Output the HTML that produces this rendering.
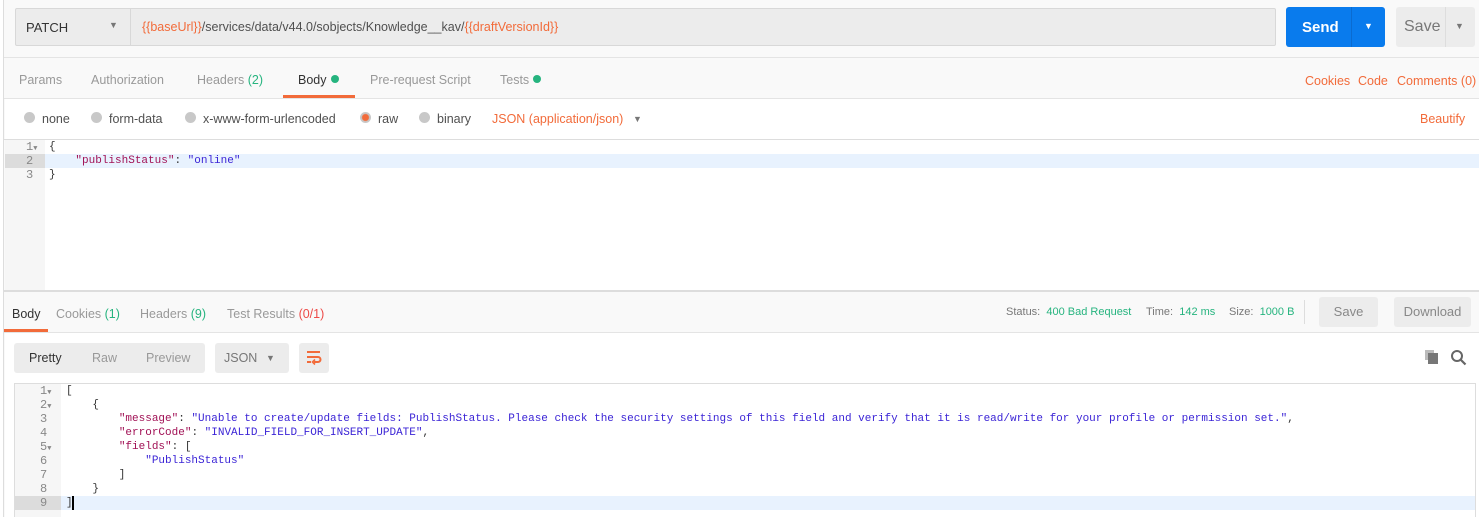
<!DOCTYPE html>
<html><head><meta charset="utf-8"><style>
*{margin:0;padding:0;box-sizing:border-box}
body{width:1479px;height:517px;overflow:hidden;background:#f9f9f9;font-family:"Liberation Sans",sans-serif;font-size:13px;color:#505050;position:relative}
.a{position:absolute;white-space:nowrap}
.o{color:#f26b3a}.g{color:#26b47f}.r{color:#ed4b48}
.mono{font-family:"Liberation Mono",monospace;font-size:11px;white-space:pre}
.k{color:#a11155}.s{color:#3b24d6}
.dot{display:inline-block;width:8px;height:8px;border-radius:50%;background:#26b47f;margin-left:4px;vertical-align:1px}
.rad{display:inline-block;width:11px;height:11px;border-radius:50%;background:#c8c8c8;margin-right:7px;vertical-align:0}
.ln{position:absolute;font-family:"Liberation Mono",monospace;font-size:12px;color:#888;line-height:14px;height:14px}
</style></head><body>
<div class="a" style="left:0;top:0;width:4px;height:517px;background:#fff;border-right:1px solid #ddd"></div>
<div class="a" style="left:15px;top:8px;width:1261px;height:38px;background:#ececec;border:1px solid #d8d8d8;border-radius:2px"></div>
<div class="a" style="left:130px;top:9px;width:1px;height:36px;background:#d8d8d8"></div>
<div class="a" style="left:26px;top:20px;color:#333">PATCH</div>
<div class="a" style="left:109px;top:20px;font-size:9px;color:#777">▼</div>
<div class="a" style="left:142px;top:20px;color:#505050;font-size:12.5px"><span class="o">{{baseUrl}}</span>/services/data/v44.0/sobjects/Knowledge__kav/<span class="o">{{draftVersionId}}</span></div>
<div class="a" style="left:1286px;top:7px;width:99px;height:40px;background:#097bed;border-radius:3px"></div>
<div class="a" style="left:1351px;top:7px;width:1px;height:40px;background:#0a6bd0"></div>
<div class="a" style="left:1302px;top:19px;color:#fff;font-weight:bold;font-size:15px">Send</div>
<div class="a" style="left:1364px;top:21px;color:#fff;font-size:9px">▼</div>
<div class="a" style="left:1396px;top:7px;width:79px;height:40px;background:#ececec;border-radius:3px"></div>
<div class="a" style="left:1445px;top:7px;width:1px;height:40px;background:#ddd"></div>
<div class="a" style="left:1404px;top:18px;color:#777;font-size:16px">Save</div>
<div class="a" style="left:1455px;top:21px;color:#777;font-size:9px">▼</div>
<div class="a" style="left:4px;top:57px;width:1475px;height:1px;background:#e4e4e4"></div>
<div class="a" style="left:19px;top:73px;color:#999;font-size:12.5px">Params</div>
<div class="a" style="left:91px;top:73px;color:#999;font-size:12.5px">Authorization</div>
<div class="a" style="left:197px;top:73px;color:#999;font-size:12.5px">Headers <span class="g">(2)</span></div>
<div class="a" style="left:298px;top:73px;color:#333;font-size:12.5px">Body<span class="dot"></span></div>
<div class="a" style="left:370px;top:73px;color:#999;font-size:12.5px">Pre-request Script</div>
<div class="a" style="left:500px;top:73px;color:#999;font-size:12.5px">Tests<span class="dot"></span></div>
<div class="a" style="left:283px;top:95px;width:72px;height:3px;background:#f26b3a"></div>
<div class="a o" style="left:1305px;top:74px;font-size:12.5px">Cookies</div>
<div class="a o" style="left:1358px;top:74px;font-size:12.5px">Code</div>
<div class="a o" style="left:1397px;top:74px;font-size:12.5px">Comments (0)</div>
<div class="a" style="left:4px;top:98px;width:1475px;height:1px;background:#e4e4e4"></div>
<div class="a" style="left:5px;top:99px;width:1474px;height:40px;background:#fff"></div>
<div class="a" style="left:24px;top:112px;font-size:12.5px"><span class="rad"></span>none</div>
<div class="a" style="left:91px;top:112px;font-size:12.5px"><span class="rad"></span>form-data</div>
<div class="a" style="left:185px;top:112px;font-size:12.5px"><span class="rad"></span>x-www-form-urlencoded</div>
<div class="a" style="left:360px;top:112px;font-size:12.5px"><span class="rad" style="background:radial-gradient(circle,#f26b3a 0 3px,#c8c8c8 4px)"></span>raw</div>
<div class="a" style="left:419px;top:112px;font-size:12.5px"><span class="rad"></span>binary</div>
<div class="a o" style="left:492px;top:112px;font-size:12.5px">JSON (application/json)</div>
<div class="a" style="left:633px;top:114px;font-size:9px;color:#777">▼</div>
<div class="a o" style="left:1420px;top:112px;font-size:12.5px">Beautify</div>
<div class="a" style="left:4px;top:139px;width:1475px;height:1px;background:#ddd"></div>
<div class="a" style="left:5px;top:140px;width:1474px;height:150px;background:#fff"></div>
<div class="a" style="left:5px;top:140px;width:40px;height:150px;background:#f6f6f6"></div>
<div class="a" style="left:5px;top:154px;width:40px;height:14px;background:#dcdcdc"></div>
<div class="a" style="left:45px;top:154px;width:1434px;height:14px;background:#e8f2fe"></div>
<div class="ln" style="left:26px;top:140px">1<span style="font-size:7px">▼</span></div>
<div class="ln" style="left:26px;top:154px">2</div>
<div class="ln" style="left:26px;top:168px">3</div>
<div class="a mono" style="left:49px;top:140px;line-height:14px;color:#333">{
    <span class="k">"publishStatus"</span>: <span class="s">"online"</span>
}</div>
<div class="a" style="left:4px;top:290px;width:1475px;height:2px;background:#ddd"></div>
<div class="a" style="left:12px;top:307px;color:#333;font-size:12.5px">Body</div>
<div class="a" style="left:56px;top:307px;color:#999;font-size:12.5px">Cookies <span class="g">(1)</span></div>
<div class="a" style="left:140px;top:307px;color:#999;font-size:12.5px">Headers <span class="g">(9)</span></div>
<div class="a" style="left:227px;top:307px;color:#999;font-size:12.5px">Test Results <span class="r">(0/1)</span></div>
<div class="a" style="left:4px;top:329px;width:44px;height:3px;background:#f26b3a"></div>
<div class="a" style="left:1006px;top:306px;font-size:11px;color:#777">Status: <span class="g">&nbsp;400 Bad Request</span></div>
<div class="a" style="left:1146px;top:306px;font-size:11px;color:#777">Time: <span class="g">&nbsp;142 ms</span></div>
<div class="a" style="left:1229px;top:306px;font-size:11px;color:#777">Size: <span class="g">&nbsp;1000 B</span></div>
<div class="a" style="left:1304px;top:300px;width:1px;height:24px;background:#ddd"></div>
<div class="a" style="left:1319px;top:297px;width:59px;height:30px;background:#ececec;border-radius:3px;color:#888;text-align:center;line-height:30px">Save</div>
<div class="a" style="left:1394px;top:297px;width:77px;height:30px;background:#ececec;border-radius:3px;color:#888;text-align:center;line-height:30px">Download</div>
<div class="a" style="left:4px;top:332px;width:1475px;height:1px;background:#e4e4e4"></div>
<div class="a" style="left:5px;top:333px;width:1474px;height:184px;background:#fff"></div>
<div class="a" style="left:14px;top:343px;width:191px;height:30px;background:#ececec;border-radius:3px"></div>
<div class="a" style="left:29px;top:351px;color:#333;font-size:12.5px">Pretty</div>
<div class="a" style="left:92px;top:351px;color:#999;font-size:12.5px">Raw</div>
<div class="a" style="left:146px;top:351px;color:#999;font-size:12.5px">Preview</div>
<div class="a" style="left:215px;top:343px;width:74px;height:30px;background:#ececec;border-radius:3px"></div>
<div class="a" style="left:224px;top:351px;color:#777;font-size:12.5px">JSON</div>
<div class="a" style="left:266px;top:353px;font-size:9px;color:#777">▼</div>
<div class="a" style="left:299px;top:343px;width:30px;height:30px;background:#ececec;border-radius:3px"></div>
<svg class="a" style="left:305px;top:349px" width="18" height="18" viewBox="0 0 18 18"><path d="M2 3h13M2 8h11a2.5 2.5 0 0 1 0 5H9M2 13h4" stroke="#f26b3a" stroke-width="2" fill="none"/><path d="M10 10.5l-2.5 2.5 2.5 2.5" stroke="#f26b3a" stroke-width="1.6" fill="none"/></svg>
<svg class="a" style="left:1424px;top:349px" width="16" height="16"><rect x="1" y="1" width="9" height="10" fill="#bbb"/><rect x="4" y="4" width="10" height="11" fill="#777"/></svg>
<svg class="a" style="left:1450px;top:349px" width="17" height="17"><circle cx="7" cy="7" r="5" stroke="#666" stroke-width="2" fill="none"/><path d="M11 11l4.5 4.5" stroke="#666" stroke-width="2.2"/></svg>
<div class="a" style="left:14px;top:383px;width:1462px;height:134px;border:1px solid #ddd;border-bottom:none;background:#fff"></div>
<div class="a" style="left:15px;top:384px;width:46px;height:133px;background:#f6f6f6"></div>
<div class="a" style="left:15px;top:496px;width:46px;height:14px;background:#dcdcdc"></div>
<div class="a" style="left:61px;top:496px;width:1414px;height:14px;background:#e8f2fe"></div>
<div class="ln" style="left:40px;top:384px">1<span style="font-size:7px">▼</span></div>
<div class="ln" style="left:40px;top:398px">2<span style="font-size:7px">▼</span></div>
<div class="ln" style="left:40px;top:412px">3</div>
<div class="ln" style="left:40px;top:426px">4</div>
<div class="ln" style="left:40px;top:440px">5<span style="font-size:7px">▼</span></div>
<div class="ln" style="left:40px;top:454px">6</div>
<div class="ln" style="left:40px;top:468px">7</div>
<div class="ln" style="left:40px;top:482px">8</div>
<div class="ln" style="left:40px;top:496px">9</div>
<div class="a mono" style="left:66px;top:384px;line-height:14px;color:#333">[
    {
        <span class="k">"message"</span>: <span class="s">"Unable to create/update fields: PublishStatus. Please check the security settings of this field and verify that it is read/write for your profile or permission set."</span>,
        <span class="k">"errorCode"</span>: <span class="s">"INVALID_FIELD_FOR_INSERT_UPDATE"</span>,
        <span class="k">"fields"</span>: [
            <span class="s">"PublishStatus"</span>
        ]
    }
]</div>
<div class="a" style="left:72px;top:496px;width:2px;height:14px;background:#000"></div>
</body></html>
